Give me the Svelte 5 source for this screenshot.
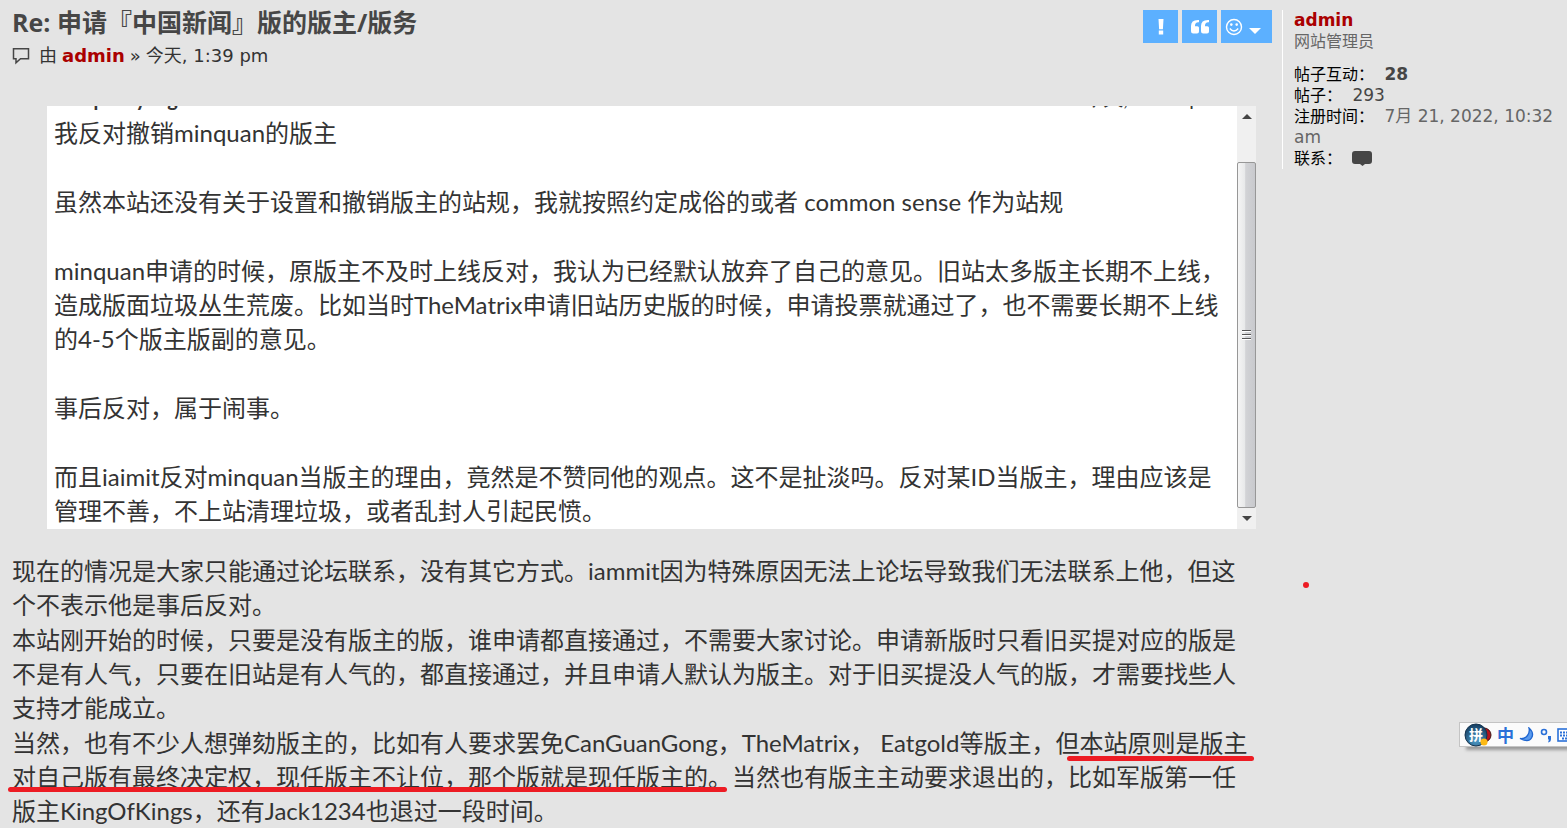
<script lang="ts">
  interface Post {
    title: string;
    author: string;
    time: string;
    paragraphs: string[];
  }

  const quote: string[] = [
    "我反对撤销minquan的版主",
    "虽然本站还没有关于设置和撤销版主的站规，我就按照约定成俗的或者 common sense 作为站规",
    "minquan申请的时候，原版主不及时上线反对，我认为已经默认放弃了自己的意见。旧站太多版主长期不上线，造成版面垃圾丛生荒废。比如当时TheMatrix申请旧站历史版的时候，申请投票就通过了，也不需要长期不上线的4-5个版主版副的意见。",
    "事后反对，属于闹事。",
    "而且iaimit反对minquan当版主的理由，竟然是不赞同他的观点。这不是扯淡吗。反对某ID当版主，理由应该是管理不善，不上站清理垃圾，或者乱封人引起民愤。",
  ];

  const post: Post = {
    title: "Re: 申请『中国新闻』版的版主/版务",
    author: "admin",
    time: "今天, 1:39 pm",
    paragraphs: [
      "现在的情况是大家只能通过论坛联系，没有其它方式。iammit因为特殊原因无法上论坛导致我们无法联系上他，但这个不表示他是事后反对。",
      "本站刚开始的时候，只要是没有版主的版，谁申请都直接通过，不需要大家讨论。申请新版时只看旧买提对应的版是不是有人气，只要在旧站是有人气的，都直接通过，并且申请人默认为版主。对于旧买提没人气的版，才需要找些人支持才能成立。",
      "当然，也有不少人想弹劾版主的，比如有人要求罢免CanGuanGong，TheMatrix， Eatgold等版主，但本站原则是版主对自己版有最终决定权，现任版主不让位，那个版就是现任版主的。当然也有版主主动要求退出的，比如军版第一任版主KingOfKings，还有Jack1234也退过一段时间。",
    ],
  };
</script>

<div class="page">
  <main class="post">
    <header class="post-header">
      <div>
        <h3>{post.title}</h3>
        <p class="meta">
          <svg class="bubble" viewBox="0 0 18 17" width="18" height="17" aria-hidden="true">
            <path d="M1.5 0.800h15v10H8.500L4 14.800v-4H1.500z" fill="none" stroke="#464646" stroke-width="1.500" />
          </svg>
          <span class="by">由</span>
          <a class="username" href="#admin">{post.author}</a>
          <span>»</span>
          <span>{post.time}</span>
        </p>
      </div>
      <div class="buttons">
        <button type="button" aria-label="举报">
          <svg viewBox="0 0 8 18" width="8" height="18">
            <path d="M1.5 1h5l-.6 10.2H2.1zM1.8 12.5h4.4v4H1.8z" fill="#fff" />
          </svg>
        </button>
        <button type="button" aria-label="引用">
          <svg viewBox="0 0 20 18" width="20" height="18">
            <path
              d="M9 2v2.2H8.2Q5 4.4 5 7.6v.6h2.4Q9 8.200 9 9.800v3.600Q9 15.500 7 15.500H3.200Q1 15.500 1 13.300V8Q1 2 7.800 2zM19 2v2.2h-.8Q15 4.400 15 7.600v.6h2.400Q19 8.200 19 9.800v3.600Q19 15.500 17 15.500h-3.800Q11 15.500 11 13.300V8Q11 2 17.800 2z"
              fill="#fff"
            />
          </svg>
        </button>
        <button type="button" class="wide" aria-label="表情">
          <svg viewBox="0 0 18 18" width="18" height="18">
            <circle cx="9" cy="9" r="7.500" fill="none" stroke="#fff" stroke-width="1.400" />
            <circle cx="6.300" cy="6.600" r="1.300" fill="#fff" />
            <circle cx="11.700" cy="6.600" r="1.300" fill="#fff" />
            <path d="M4.800 10.500Q9 15.500 13.200 10.500" fill="none" stroke="#fff" stroke-width="1.400" />
          </svg>
          <svg class="caret" viewBox="0 0 12 6" width="12" height="6">
            <path d="M0 0h12L6 6z" fill="#fff" />
          </svg>
        </button>
      </div>
    </header>

    <blockquote>
      <div class="quote-view">
        <div class="quote-source">
          <cite>minquan yang</cite>
          <span>今天, 12:32 pm</span>
        </div>
        {#each quote as text}
          <p>{text}</p>
        {/each}
      </div>
      <div class="scrollbar" aria-hidden="true">
        <svg class="arrow" viewBox="0 0 10 5" width="10" height="5"><path d="M0 5h10L5 0z" fill="#444" /></svg>
        <div class="thumb"><i></i><i></i><i></i></div>
        <svg class="arrow" viewBox="0 0 10 5" width="10" height="5"><path d="M0 0h10L5 5z" fill="#444" /></svg>
      </div>
    </blockquote>

    <div class="content">
      {#each post.paragraphs as text}
        <p>{text}</p>
      {/each}
      <span class="mark mark-first"></span>
      <span class="mark mark-second"></span>
    </div>
  </main>

  <aside class="profile">
    <a class="username" href="#admin">admin</a>
    <p class="rank">网站管理员</p>
    <dl>
      <div><dt>帖子互动：</dt> <dd class="strong">28</dd></div>
      <div><dt>帖子：</dt> <dd class="count">293</dd></div>
      <div><dt>注册时间：</dt> <dd>7月 21, 2022, 10:32 am</dd></div>
      <div>
        <dt>联系：</dt>
        <dd>
          <a href="#contact" aria-label="联系 admin">
            <svg viewBox="0 0 20 15" width="20" height="15">
              <path d="M3 0h14q3 0 3 3v7q0 3-3 3h-4l-2.500 2L8 13H3q-3 0-3-3V3q0-3 3-3z" fill="#464646" />
            </svg>
          </a>
        </dd>
      </div>
    </dl>
  </aside>

  <span class="dot"></span>

  <div class="ime">
    <svg viewBox="0 0 28 26" width="28" height="26" aria-hidden="true">
      <defs>
        <radialGradient id="ball" cx="50%" cy="75%" r="75%">
          <stop offset="0" stop-color="#4f9cc8" />
          <stop offset="1" stop-color="#123a5e" />
        </radialGradient>
      </defs>
      <circle cx="20" cy="13" r="7" fill="#b5121b" stroke="#3b1518" />
      <circle cx="12" cy="13" r="11" fill="url(#ball)" stroke="#16344f" />
      <text x="12" y="18" text-anchor="middle">拼</text>
      <circle cx="20" cy="20" r="3.500" fill="#fdb913" />
    </svg>
    <span class="mode">中</span>
    <svg viewBox="0 0 16 16" width="16" height="16" aria-hidden="true">
      <path d="M10 1q5.500 5 2.500 10T1 11.500Q6 12 8.500 8.500T10 1z" fill="#5b9bee" stroke="#1f66d0" stroke-width="1.300" />
    </svg>
    <svg viewBox="0 0 12 16" width="12" height="16" aria-hidden="true">
      <circle cx="4" cy="5" r="2.500" fill="none" stroke="#2a70d8" stroke-width="1.600" />
      <path d="M8 9h3v3q0 3-3 3.500l1-3H8z" fill="#2a70d8" />
    </svg>
    <svg viewBox="0 0 18 14" width="18" height="14" aria-hidden="true">
      <rect x="1" y="1" width="16" height="12" fill="#fff" stroke="#2a70d8" stroke-width="1.600" />
      <path d="M3 4.500h12M3 7.500h12M5 10.500h8" stroke="#2a70d8" stroke-width="1.800" stroke-dasharray="2 1" />
    </svg>
  </div>
</div>

<style>
  :global(body) {
    background: #e4e4e4;
  }

  .page {
    position: relative;
    display: grid;
    grid-template-columns: minmax(0, 1fr) 285px;
    align-items: start;
    color: #333;
    font-family: "DejaVu Sans", "Noto Sans CJK SC", sans-serif;
    overflow: hidden;
  }

  h3,
  p,
  dl,
  dd,
  blockquote {
    margin: 0;
  }

  .post {
    padding: 5px 10px 0 12px;
  }

  .post-header {
    display: flex;
    justify-content: space-between;
  }

  h3 {
    color: #464646;
    font: bold 25px/34px "Open Sans", "Noto Sans CJK SC", sans-serif;
  }

  .meta {
    display: flex;
    align-items: center;
    gap: 5px;
    font-size: 18px;
    line-height: 34px;
  }

  .by {
    margin-left: 4px;
  }

  .username {
    color: #a00;
    font-weight: bold;
    text-decoration: none;
  }

  .buttons {
    display: flex;
    align-items: flex-start;
    gap: 4px;
    padding-top: 5px;
  }

  button {
    display: flex;
    align-items: center;
    justify-content: center;
    width: 35px;
    height: 33px;
    padding: 0;
    border: 0;
    background: #5cb0ff;
    cursor: pointer;
  }

  .wide {
    gap: 6px;
    width: 51px;
    padding-right: 8px;
  }

  .caret {
    margin-top: 8px;
  }

  blockquote {
    display: flex;
    height: 423px;
    margin: 33px 16px 0 35px;
    background: #fff;
  }

  .quote-view {
    display: flex;
    flex: 1;
    flex-direction: column;
    justify-content: flex-end;
    gap: 35px;
    padding: 0 10px 1px 7px;
    overflow: hidden;
  }

  .quote-view p,
  .content p {
    font: 24px/34px Lato, "Noto Sans CJK SC", sans-serif;
  }

  .quote-source {
    display: flex;
    justify-content: space-between;
    padding-right: 10px;
    margin-bottom: -34px;
    font: 20px/34px Lato, "Noto Sans CJK SC", sans-serif;
  }

  cite {
    font-style: normal;
    font-weight: bold;
  }

  .scrollbar {
    display: flex;
    flex-direction: column;
    align-items: center;
    justify-content: space-between;
    width: 19px;
    padding: 8px 0;
    background: #f0f0f0;
  }

  .thumb {
    display: flex;
    flex: 1;
    flex-direction: column;
    align-items: center;
    justify-content: center;
    gap: 2px;
    box-sizing: border-box;
    width: 19px;
    margin: 43px 0 8px;
    border: 1px solid #979797;
    border-radius: 2px;
    background: linear-gradient(90deg, #f5f5f5, #e8e9ea 40%, #d2d3d6 45%, #c8c9cd);
  }

  .thumb i {
    width: 9px;
    height: 2px;
    background: linear-gradient(#555 50%, #fff 50%);
  }

  .content {
    position: relative;
    display: flex;
    flex-direction: column;
    gap: 1px;
    padding-top: 25px;
    margin-right: 16px;
  }

  .mark {
    position: absolute;
    height: 5px;
    border-radius: 3px;
    background: #ed1c24;
  }

  .mark-first {
    right: 2px;
    bottom: 67px;
    width: 187px;
  }

  .mark-second {
    left: -4px;
    bottom: 36px;
    width: 719px;
  }

  .profile {
    margin-top: 10px;
    padding: 0 12px 0 11px;
    border-left: 1px solid #fff;
    color: #666;
    font-size: 17px;
    line-height: 21px;
  }

  .rank,
  dt {
    font-size: 16px;
  }

  dl {
    margin-top: 12px;
  }

  dt,
  dd {
    display: inline;
  }

  dt {
    margin-right: 5px;
    color: #000;
  }

  dd svg {
    vertical-align: -2px;
  }

  .strong {
    color: #464646;
    font-weight: bold;
  }

  .count {
    color: #464646;
  }

  .dot {
    position: absolute;
    top: 582px;
    right: 258px;
    width: 6px;
    height: 6px;
    border-radius: 50%;
    background: #ed1c24;
  }

  .ime {
    position: absolute;
    top: 722px;
    right: -9px;
    display: flex;
    align-items: center;
    gap: 5px;
    box-sizing: border-box;
    height: 25px;
    padding-left: 4px;
    border: 1px solid #c4c4c4;
    background: #fbfbfb;
    box-shadow: 6px 4px 3px -1px #999;
  }

  .ime text {
    fill: #fff;
    font: bold 14px "Noto Sans CJK SC", sans-serif;
  }

  .mode {
    color: #2a70d8;
    font: bold 17px/23px "Noto Sans CJK SC", sans-serif;
  }
</style>
